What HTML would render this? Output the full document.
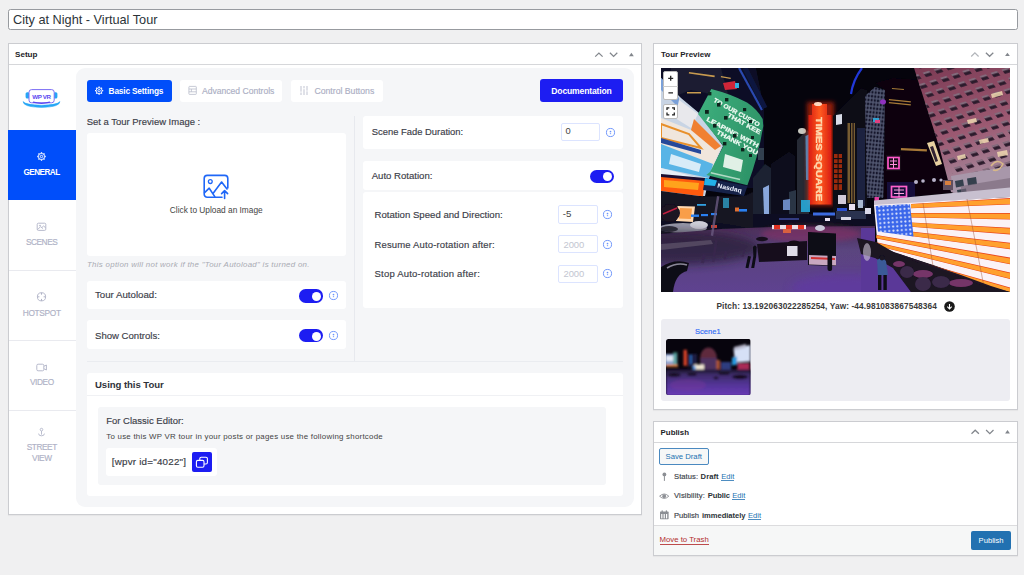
<!DOCTYPE html>
<html><head><meta charset="utf-8"><title>Edit Tour</title>
<style>
html,body{margin:0;padding:0;}
body{width:1024px;height:575px;overflow:hidden;background:#f0f0f1;font-family:"Liberation Sans",sans-serif;}
#page{position:relative;width:1024px;height:575px;overflow:hidden;background:#f0f0f1;}
.b{position:absolute;box-sizing:border-box;}
.t{position:absolute;white-space:nowrap;line-height:1;}
svg{position:absolute;overflow:visible;}
.pb{background:#fff;border:1px solid #cbccd0;box-shadow:0 1px 1px rgba(0,0,0,.04);}
.w{background:#fff;border-radius:3px;}
.tg{background:#1d1df2;border-radius:7px;}
.kn{background:#fff;border-radius:50%;}
.in{background:#fff;border:1px solid #dce4ff;border-radius:2px;}

</style></head>
<body>
<div id="page">
<div class="b " style="left:8px;top:9px;width:1010px;height:21px;background:#fff;border:1px solid #979a9f;border-radius:2.5px;"></div>
<span class="t" style="left:13.00px;top:14.33px;font-size:12.72px;color:#2c3338;">City at Night - Virtual Tour</span>
<div class="b pb" style="left:8px;top:43px;width:634px;height:472px;"></div>
<div class="b " style="left:9px;top:64px;width:632px;height:1px;background:#d6d7da;"></div>
<span class="t" style="left:15.00px;top:51.39px;font-size:8.10px;color:#1d2327;font-weight:bold;">Setup</span>
<svg style="left:0;top:0" width="1024" height="575" viewBox="0 0 1024 575" fill="none"><path d="M595.1999999999999 56.6 L598.9 53.0 L602.6 56.6" stroke="#82868c" stroke-width="1.25"/><path d="M609.9 52.800000000000004 L613.6 56.400000000000006 L617.3000000000001 52.800000000000004" stroke="#82868c" stroke-width="1.25"/><path d="M629.0 56.2 L631.4 52.800000000000004 L633.8 56.2 Z" fill="#82868c"/></svg>
<div class="b pb" style="left:653px;top:43px;width:365px;height:367px;"></div>
<div class="b " style="left:654px;top:64px;width:363px;height:1px;background:#d6d7da;"></div>
<span class="t" style="left:661.00px;top:51.01px;font-size:7.96px;color:#1d2327;font-weight:bold;">Tour Preview</span>
<svg style="left:0;top:0" width="1024" height="575" viewBox="0 0 1024 575" fill="none"><path d="M971.1999999999999 56.5 L974.9 52.9 L978.6 56.5" stroke="#b2b5ba" stroke-width="1.25"/><path d="M985.9 52.7 L989.6 56.300000000000004 L993.3000000000001 52.7" stroke="#82868c" stroke-width="1.25"/><path d="M1005.0500000000001 56.1 L1007.45 52.7 L1009.85 56.1 Z" fill="#82868c"/></svg>
<div class="b pb" style="left:653px;top:421px;width:365px;height:135px;"></div>
<div class="b " style="left:654px;top:442px;width:363px;height:1px;background:#d6d7da;"></div>
<span class="t" style="left:660.60px;top:428.59px;font-size:7.86px;color:#1d2327;font-weight:bold;">Publish</span>
<svg style="left:0;top:0" width="1024" height="575" viewBox="0 0 1024 575" fill="none"><path d="M971.5 433.79999999999995 L975.2 430.2 L978.9000000000001 433.79999999999995" stroke="#82868c" stroke-width="1.25"/><path d="M986.0999999999999 430.0 L989.8 433.59999999999997 L993.5 430.0" stroke="#82868c" stroke-width="1.25"/><path d="M1005.1 433.4 L1007.5 430.0 L1009.9 433.4 Z" fill="#82868c"/></svg>
<div class="b " style="left:8px;top:130px;width:68px;height:70px;background:#004efa;"></div>
<div class="b " style="left:9px;top:270px;width:67px;height:1px;background:#e9eaef;"></div>
<div class="b " style="left:9px;top:340px;width:67px;height:1px;background:#e9eaef;"></div>
<div class="b " style="left:9px;top:410px;width:67px;height:1px;background:#e9eaef;"></div>
<span class="t" style="left:23.50px;top:168.81px;font-size:8.20px;color:#fff;letter-spacing:-0.549px;font-weight:bold;">GENERAL</span>
<span class="t" style="left:26.00px;top:238.07px;font-size:8.30px;color:#afb2c6;letter-spacing:-0.481px;-webkit-text-stroke:0.16px #afb2c6;">SCENES</span>
<span class="t" style="left:22.75px;top:308.97px;font-size:8.30px;color:#afb2c6;letter-spacing:-0.317px;-webkit-text-stroke:0.16px #afb2c6;">HOTSPOT</span>
<span class="t" style="left:30.00px;top:378.47px;font-size:8.30px;color:#afb2c6;letter-spacing:-0.416px;-webkit-text-stroke:0.16px #afb2c6;">VIDEO</span>
<span class="t" style="left:26.75px;top:443.47px;font-size:8.30px;color:#afb2c6;letter-spacing:-0.457px;-webkit-text-stroke:0.16px #afb2c6;">STREET</span>
<span class="t" style="left:32.00px;top:454.07px;font-size:8.30px;color:#afb2c6;letter-spacing:-0.366px;-webkit-text-stroke:0.16px #afb2c6;">VIEW</span>
<svg style="left:0;top:0" width="80" height="520" viewBox="0 0 80 520" fill="none">
<!-- logo -->
<path d="M23 101.6 Q23.4 107.2 41.5 107.4 Q59.6 107.2 60 101.6 Q57 105 41.5 105.2 Q26 105 23 101.6 Z" fill="#26a6f5" stroke="#26a6f5" stroke-width="0.5"/>
<rect x="25.6" y="92.2" width="4" height="6.4" rx="1.6" fill="#26a6f5"/>
<rect x="53.4" y="92.2" width="4" height="6.4" rx="1.6" fill="#26a6f5"/>
<rect x="29" y="89.6" width="25.2" height="13.2" rx="2.6" fill="#fff" stroke="#7a6cf4" stroke-width="1"/>
<path d="M33 102.2 Q41.5 104.4 50 102.2" stroke="#5a48f0" stroke-width="1.2"/>
<!-- gear -->
<g stroke="#fff" stroke-width="0.9">
<circle cx="41.5" cy="156.5" r="3.1"/><circle cx="41.5" cy="156.5" r="1.2"/>
<g stroke-width="1.3"><path d="M41.5 152.3v1.1M41.5 159.6v1.1M37.3 156.5h1.1M44.6 156.5h1.1M38.5 153.5l.8 .8M43.7 158.7l.8 .8M38.5 159.5l.8 -.8M43.7 154.3l.8 -.8"/></g>
</g>
<!-- scenes -->
<g stroke="#afb2c6" stroke-width="0.9"><rect x="37.2" y="223.2" width="8.6" height="7.2" rx="1.2"/><path d="M37.6 229.6l3-3 2.2 2M42 227.4l1.6-1.4 2 1.8"/><circle cx="40" cy="225.6" r="0.5"/></g>
<!-- hotspot -->
<g stroke="#afb2c6" stroke-width="0.9"><circle cx="41.5" cy="296.8" r="4.1"/><path d="M41.5 292.7v2M41.5 298.9v2M37.4 296.8h2M43.6 296.8h2" stroke-width="1"/></g>
<!-- video -->
<g stroke="#afb2c6" stroke-width="0.9"><rect x="36.8" y="364.2" width="7" height="6.6" rx="1.3"/><path d="M44 366.2l2.4-1.2v5l-2.4-1.2"/></g>
<!-- street view -->
<g stroke="#afb2c6" stroke-width="0.85"><circle cx="41.5" cy="429.6" r="1.3"/><path d="M41.5 431v3.6M38.6 433.6q0 2.2 2.9 2.2t2.9-2.2"/></g>
</svg>

<span class="t" style="left:32.20px;top:93.85px;font-size:6.20px;color:#5a48f0;letter-spacing:-0.322px;font-weight:bold;">WP VR</span>
<div class="b " style="left:76px;top:68px;width:558px;height:439px;background:#f5f6f8;border-radius:9px;"></div>
<div class="b " style="left:87px;top:80px;width:85px;height:21.8px;background:#004efa;border-radius:3px;"></div>
<span class="t" style="left:108.60px;top:87.37px;font-size:8.30px;color:#fff;letter-spacing:-0.178px;font-weight:bold;">Basic Settings</span>
<div class="b w" style="left:180px;top:80px;width:102.3px;height:21.8px;"></div>
<span class="t" style="left:202.10px;top:87.16px;font-size:8.56px;color:#acafc4;-webkit-text-stroke:0.16px #acafc4;">Advanced Controls</span>
<div class="b w" style="left:291.3px;top:80px;width:91.7px;height:21.8px;"></div>
<span class="t" style="left:314.40px;top:87.03px;font-size:8.70px;color:#acafc4;-webkit-text-stroke:0.16px #acafc4;">Control Buttons</span>
<div class="b " style="left:540px;top:79.3px;width:82.6px;height:22.3px;background:#1d1df2;border-radius:3px;"></div>
<span class="t" style="left:551.25px;top:86.52px;font-size:8.60px;color:#fff;letter-spacing:-0.161px;font-weight:bold;">Documentation</span>
<span class="t" style="left:86.70px;top:117.29px;font-size:9.47px;color:#3c4049;-webkit-text-stroke:0.16px #3c4049;">Set a Tour Preview Image :</span>
<div class="b w" style="left:87px;top:133px;width:259px;height:123.3px;"></div>
<span class="t" style="left:169.80px;top:206.45px;font-size:8.32px;color:#444;">Click to Upload an Image</span>
<span class="t" style="left:87.00px;top:260.56px;font-size:7.90px;color:#a9abb3;letter-spacing:0.286px;font-style:italic;">This option will not work if the &quot;Tour Autoload&quot; is turned on.</span>
<div class="b w" style="left:87px;top:281px;width:259px;height:28px;"></div>
<span class="t" style="left:95.00px;top:290.29px;font-size:9.70px;color:#3c4049;-webkit-text-stroke:0.16px #3c4049;">Tour Autoload:</span>
<div class="b w" style="left:87px;top:320.3px;width:259px;height:29.2px;"></div>
<span class="t" style="left:95.00px;top:330.64px;font-size:9.59px;color:#3c4049;-webkit-text-stroke:0.16px #3c4049;">Show Controls:</span>
<div class="b " style="left:354px;top:116px;width:1px;height:245px;background:#e7e9ee;"></div>
<div class="b " style="left:87px;top:361px;width:536px;height:1px;background:#eaecf0;"></div>
<div class="b w" style="left:87px;top:372.5px;width:536px;height:123.1px;"></div>
<div class="b " style="left:87px;top:395px;width:536px;height:1px;background:#f0f1f4;"></div>
<span class="t" style="left:95.00px;top:379.87px;font-size:9.60px;color:#2f323a;letter-spacing:-0.062px;font-weight:bold;">Using this Tour</span>
<div class="b " style="left:98px;top:407px;width:508px;height:77.5px;background:#f5f6f8;border-radius:3px;"></div>
<span class="t" style="left:106.25px;top:416.22px;font-size:9.49px;color:#3c4049;-webkit-text-stroke:0.16px #3c4049;">For Classic Editor:</span>
<span class="t" style="left:106.25px;top:433.06px;font-size:7.90px;color:#444;letter-spacing:0.241px;">To use this WP VR tour in your posts or pages use the following shortcode</span>
<div class="b w" style="left:106px;top:447.5px;width:111px;height:28.3px;"></div>
<span class="t" style="left:111.75px;top:456.70px;font-size:9.80px;color:#3a3d46;letter-spacing:0.221px;-webkit-text-stroke:0.16px #3a3d46;">[wpvr id=&quot;4022&quot;]</span>
<div class="b " style="left:191.75px;top:451.5px;width:19.8px;height:20.2px;background:#1d1df2;border-radius:2px;"></div>
<svg style="left:191.75px;top:451.5px" width="19.8" height="20.2" viewBox="0 0 19.8 20.2" fill="none" stroke="#fff" stroke-width="1.1"><rect x="7.8" y="5.2" width="7.6" height="6.8" rx="1.4"/><rect x="4.4" y="8.4" width="7.6" height="6.8" rx="1.4" fill="#1d1df2"/></svg>
<div class="b w" style="left:363px;top:116px;width:259.5px;height:33px;"></div>
<span class="t" style="left:371.70px;top:127.44px;font-size:9.41px;color:#3c4049;-webkit-text-stroke:0.16px #3c4049;">Scene Fade Duration:</span>
<div class="b in" style="left:561.25px;top:123.4px;width:38.75px;height:17.9px;"></div>
<span class="t" style="left:565.60px;top:127.49px;font-size:9.35px;color:#444;">0</span>
<div class="b w" style="left:363px;top:161px;width:259.5px;height:29px;"></div>
<span class="t" style="left:371.70px;top:170.64px;font-size:9.59px;color:#3c4049;-webkit-text-stroke:0.16px #3c4049;">Auto Rotation:</span>
<div class="b w" style="left:363px;top:191.5px;width:259.5px;height:116.5px;"></div>
<span class="t" style="left:374.50px;top:209.66px;font-size:9.62px;color:#3c4049;-webkit-text-stroke:0.16px #3c4049;">Rotation Speed and Direction:</span>
<span class="t" style="left:374.50px;top:239.66px;font-size:9.50px;color:#3c4049;letter-spacing:0.153px;-webkit-text-stroke:0.16px #3c4049;">Resume Auto-rotation after:</span>
<span class="t" style="left:374.50px;top:269.26px;font-size:9.50px;color:#3c4049;letter-spacing:0.206px;-webkit-text-stroke:0.16px #3c4049;">Stop Auto-rotation after:</span>
<div class="b in" style="left:558px;top:205.25px;width:39.5px;height:18.3px;"></div>
<span class="t" style="left:562.75px;top:209.41px;font-size:9.67px;color:#444;">-5</span>
<div class="b in" style="left:558px;top:235px;width:39.5px;height:18.2px;"></div>
<span class="t" style="left:563.40px;top:239.71px;font-size:9.44px;color:#c3c6d1;">2000</span>
<div class="b in" style="left:558px;top:264.7px;width:39.5px;height:18.3px;"></div>
<span class="t" style="left:563.40px;top:269.31px;font-size:9.44px;color:#c3c6d1;">2000</span>
<div class="b tg" style="left:589.6px;top:169.75px;width:24.8px;height:13px;border-radius:6.5px;"></div>
<div class="b kn" style="left:603.4px;top:171.9px;width:9px;height:9px;"></div>
<div class="b tg" style="left:298.5px;top:289.4px;width:24.9px;height:13.3px;border-radius:6.65px;"></div>
<div class="b kn" style="left:312.0px;top:291.7px;width:9px;height:9px;"></div>
<div class="b tg" style="left:298.5px;top:329.4px;width:24.9px;height:13.1px;border-radius:6.55px;"></div>
<div class="b kn" style="left:312.0px;top:331.5px;width:9px;height:9px;"></div>
<svg style="left:604.75px;top:126.9px" width="11" height="11" viewBox="-5.5 -5.5 11 11"><circle r="4.05" fill="none" stroke="#6a92fa" stroke-width="0.95"/><circle cy="-1.0" r="0.85" fill="#6a92fa"/><rect x="-0.6" y="0.4" width="1.2" height="1.3" fill="#6a92fa" opacity="0.75"/></svg>
<svg style="left:601.75px;top:208.9px" width="11" height="11" viewBox="-5.5 -5.5 11 11"><circle r="4.05" fill="none" stroke="#6a92fa" stroke-width="0.95"/><circle cy="-1.0" r="0.85" fill="#6a92fa"/><rect x="-0.6" y="0.4" width="1.2" height="1.3" fill="#6a92fa" opacity="0.75"/></svg>
<svg style="left:601.75px;top:238.6px" width="11" height="11" viewBox="-5.5 -5.5 11 11"><circle r="4.05" fill="none" stroke="#6a92fa" stroke-width="0.95"/><circle cy="-1.0" r="0.85" fill="#6a92fa"/><rect x="-0.6" y="0.4" width="1.2" height="1.3" fill="#6a92fa" opacity="0.75"/></svg>
<svg style="left:601.75px;top:268.3px" width="11" height="11" viewBox="-5.5 -5.5 11 11"><circle r="4.05" fill="none" stroke="#6a92fa" stroke-width="0.95"/><circle cy="-1.0" r="0.85" fill="#6a92fa"/><rect x="-0.6" y="0.4" width="1.2" height="1.3" fill="#6a92fa" opacity="0.75"/></svg>
<svg style="left:327.6px;top:289.75px" width="11" height="11" viewBox="-5.5 -5.5 11 11"><circle r="4.05" fill="none" stroke="#6a92fa" stroke-width="0.95"/><circle cy="-1.0" r="0.85" fill="#6a92fa"/><rect x="-0.6" y="0.4" width="1.2" height="1.3" fill="#6a92fa" opacity="0.75"/></svg>
<svg style="left:327.6px;top:329.6px" width="11" height="11" viewBox="-5.5 -5.5 11 11"><circle r="4.05" fill="none" stroke="#6a92fa" stroke-width="0.95"/><circle cy="-1.0" r="0.85" fill="#6a92fa"/><rect x="-0.6" y="0.4" width="1.2" height="1.3" fill="#6a92fa" opacity="0.75"/></svg>
<svg style="left:0;top:0" width="640" height="520" viewBox="0 0 640 520" fill="none">
<!-- basic gear -->
<g stroke="#fff" stroke-width="0.9"><circle cx="99.1" cy="90.7" r="3"/><circle cx="99.1" cy="90.7" r="1.2"/><g stroke-width="1.3"><path d="M99.1 86.6v1.1M99.1 93.7v1.1M95 90.7h1.1M102.1 90.7h1.1M96.2 87.8l.8 .8M101.2 92.8l.8 .8M96.2 93.6l.8 -.8M101.2 88.6l.8 -.8"/></g></g>
<!-- advanced icon -->
<g stroke="#b9bccc" stroke-width="0.8"><rect x="188.9" y="86.4" width="7.4" height="8" rx="0.6"/><path d="M188.9 89h7.4M188.9 91.8h7.4M191.4 89v2.8"/></g>
<!-- control icon -->
<g stroke="#b9bccc" stroke-width="0.9"><path d="M301 86v9M304 86v9M307 86v9"/></g>
<g stroke="#f5f6f8" stroke-width="1.2"><path d="M300 92.2h2M303 88.6h2M306 91h2"/></g>
<!-- upload icon -->
<g stroke="#1f67f7" stroke-width="1.6" stroke-linecap="round" stroke-linejoin="round">
<path d="M222 197.2H207.2a3 3 0 0 1 -3 -3V178.4a3 3 0 0 1 3 -3h17.6a3 3 0 0 1 3 3V188"/>
<circle cx="210.3" cy="181.6" r="1.9" stroke-width="1.3"/>
<path d="M204.6 192.6l4.6 -4.4 5.6 8.4M213 193.4l8.6 -11.4 5.4 7"/>
<path d="M224.6 198.4v-7.6M221.6 193.6l3 -3 3 3"/>
</g>
</svg>

<svg style="left:661px;top:68px;overflow:hidden" width="349" height="224" viewBox="0 0 349 224">
<defs>
<filter id="bl" x="-5%" y="-5%" width="110%" height="110%"><feGaussianBlur stdDeviation="0.65"/></filter>
<filter id="bl2" x="-20%" y="-20%" width="140%" height="140%"><feGaussianBlur stdDeviation="2.2"/></filter>
<filter id="bl4" x="-30%" y="-30%" width="160%" height="160%"><feGaussianBlur stdDeviation="5"/></filter>
<linearGradient id="gnd" x1="0" y1="0" x2="0" y2="1"><stop offset="0" stop-color="#4c2c56"/><stop offset="0.35" stop-color="#5a447e"/><stop offset="1" stop-color="#5e4290"/></linearGradient>
<linearGradient id="gndL" x1="0" y1="0" x2="1" y2="0"><stop offset="0" stop-color="#1c1828" stop-opacity="0.95"/><stop offset="0.55" stop-color="#2a2238" stop-opacity="0.55"/><stop offset="1" stop-color="#2a2238" stop-opacity="0"/></linearGradient>
<linearGradient id="pinkb" x1="0" y1="0" x2="0.25" y2="1"><stop offset="0" stop-color="#7c3a54"/><stop offset="0.6" stop-color="#9c5a72"/><stop offset="1" stop-color="#a68a9e"/></linearGradient>
<linearGradient id="grn" x1="0" y1="0" x2="1" y2="0.4"><stop offset="0" stop-color="#3eb07e"/><stop offset="1" stop-color="#2e9468"/></linearGradient>
<linearGradient id="ts" x1="0" y1="0" x2="1" y2="0"><stop offset="0" stop-color="#d81c10"/><stop offset="0.5" stop-color="#ff5a20"/><stop offset="1" stop-color="#d81c10"/></linearGradient>
<pattern id="win" width="11.5" height="10" patternUnits="userSpaceOnUse" patternTransform="rotate(-17) skewX(20)"><rect x="1" y="1" width="6.6" height="5.2" fill="#2c1a2c"/><rect x="1" y="1" width="6.6" height="2" fill="#d0b0c0" opacity="0.55"/></pattern>
<pattern id="lat" width="3.2" height="4" patternUnits="userSpaceOnUse" patternTransform="rotate(6)"><rect width="3.2" height="4" fill="#8088a8"/><rect x="0.6" y="0.7" width="2.1" height="2.6" fill="#1a1c34"/></pattern>
<pattern id="dots" width="4.2" height="4.2" patternUnits="userSpaceOnUse" patternTransform="rotate(-4)"><circle cx="2.1" cy="2.1" r="1" fill="#fff"/></pattern>
</defs>
<rect width="349" height="224" fill="#05040c"/>
<g filter="url(#bl)">
<polygon points="0,0 95,0 103,40 103,120 0,120" fill="#0b0f26"/>
<polygon points="10,0 60,0 68,30 30,22 10,30" fill="#1a1c30"/>
<g fill="#c89a50"><rect x="28" y="4" width="26" height="1.6" transform="rotate(8 28 4)"/><rect x="26" y="24" width="14" height="1.5"/><rect x="60" y="8" width="10" height="1.3" transform="rotate(10 60 8)"/></g>
<path d="M78 0 L101 42" stroke="#2a48b0" stroke-width="2.2" fill="none"/>
<path d="M84 0 L104 40" stroke="#0e1640" stroke-width="5" fill="none"/>
<polygon points="62,15 74,13 76,21 64,22" fill="#d02838"/><rect x="74" y="15" width="4" height="5" fill="#30b0e0"/>
<polygon points="0,10 20,30 38,45 62,78 49,106 44,128 0,128" fill="#c8d4e4"/>
<polygon points="0,10 18,30 18,40 0,22" fill="#7aa0d8"/>
<polygon points="18,32 37,46 30,60 14,50" fill="#e8e8ec"/>
<polygon points="0,50 30,62 60,80 52,98 0,78" fill="#f0e6dc"/>
<polygon points="33,51 60,78 54,82 30,62" fill="#f08030"/>
<polygon points="0,56 28,66 40,80 0,70" fill="none" stroke="#e8902c" stroke-width="2"/>
<polygon points="0,76 52,96 48,110 0,100" fill="#58b4e6"/>
<polygon points="10,86 40,96 38,104 8,96" fill="#d8ecf8"/>
<polygon points="0,100 46,112 44,118 0,108" fill="#e8eef6"/>
<polygon points="0,70 40,82 40,86 0,75" fill="#284a9a"/>
<path d="M50.3 21 Q70 26 86 34.5 Q96 41 101.7 51 L102.3 58 Q97 90 86.4 117.2 L45.3 107 L49 104 L62.4 78 L37 46 Z" fill="url(#grn)"/>
<g font-family="Liberation Sans, sans-serif" font-weight="bold" font-size="6.2" fill="#eefaf2" stroke="#eefaf2" stroke-width="0.25"><text transform="translate(52,33.5) rotate(29)" textLength="52" lengthAdjust="spacingAndGlyphs">TO OUR CUSTO</text><text transform="translate(66,48.5) rotate(29)" textLength="37" lengthAdjust="spacingAndGlyphs">THAT KEE</text><text transform="translate(45,52.5) rotate(28)" textLength="58" lengthAdjust="spacingAndGlyphs">LEAPING WITH</text><text transform="translate(55,65.5) rotate(28)" textLength="46" lengthAdjust="spacingAndGlyphs">THANK YOU</text></g>
<g fill="#10241c"><rect x="47" y="24" width="3.4" height="3.4"/><rect x="56" y="35" width="3.6" height="3.6"/><rect x="64" y="30" width="3.4" height="3.4"/><rect x="44" y="42" width="3.8" height="3.8"/><rect x="63" y="48" width="3.6" height="3.6"/><rect x="82" y="40" width="3.2" height="3.2"/><rect x="52" y="56" width="3.6" height="3.6"/><rect x="72" y="66" width="3.6" height="3.6"/><rect x="88" y="52" width="3" height="3"/><rect x="62" y="74" width="3.4" height="3.4"/><rect x="80" y="80" width="3.4" height="3.4"/><rect x="90" y="68" width="3" height="3"/><rect x="88" y="86" width="3" height="3"/></g>
<g fill="#e0f0e6"><polygon points="64,86 82,92 80,104 62,99"/></g>
<rect x="50" y="104" width="30" height="1.6" transform="rotate(13 50 104)" fill="#d0e8da" opacity="0.8"/>
<polygon points="0,108 44,112 42,128.5 0,123" fill="#ff5a10"/>
<polygon points="3,112 38,115 37,122 3,119" fill="#ffb020" opacity="0.85"/>
<polygon points="0,106 44,110 44,113 0,109" fill="#1a1030"/>
<polygon points="44,110 86.5,118 83,128 42,122" fill="#14204a"/>
<polygon points="44,110 56,112.5 54,118 43,117" fill="#20b0e8"/>
<text transform="translate(56,119.6) rotate(12)" font-family="Liberation Sans, sans-serif" font-weight="bold" font-size="6.4" textLength="25" lengthAdjust="spacingAndGlyphs" fill="#f0f4ff">Nasdaq</text>
<polygon points="92,110 104,96 110,100 110,146 92,146" fill="#1a2230"/>
<polygon points="102,120 108,117 108,146 103,146" fill="#8aa8dc"/>
<rect x="97" y="80" width="6" height="12" fill="#304050" />
<polygon points="0,123 42,128.5 83,128 92,124 92,160 0,166" fill="#121222"/>
<polygon points="16.5,138 34,138.5 32,154 15,153" fill="#ffd8b0"/><polygon points="19,140 31,140.5 30,151 18,150.5" fill="#f89030" opacity="0.8"/>
<ellipse cx="9" cy="145" rx="10" ry="9" fill="#1a1220"/><path d="M2 146 L16 140" stroke="#c02040" stroke-width="1.6"/>
<g fill="#2a80f0"><rect x="30" y="146.5" width="8" height="2.4"/><rect x="40" y="146" width="7" height="2.2"/><rect x="50" y="145" width="6" height="2.2"/><rect x="78" y="141" width="8" height="2.6"/><rect x="36" y="136" width="9" height="1.8" fill="#30a0e0"/></g>
<rect x="74" y="139.5" width="4" height="4" fill="#e07030"/>
<polygon points="62,130 68,130 68,140 62,140" fill="#30a0c8" opacity="0.8"/>
<ellipse cx="22" cy="160" rx="24" ry="5" fill="#9a9aaa"/><ellipse cx="38" cy="157" rx="9" ry="4" fill="#d0d0da"/><ellipse cx="8" cy="161" rx="9" ry="3" fill="#30303c"/>
<rect x="50" y="157" width="6" height="3" fill="#d04030"/>
<polygon points="110,96 128,84 134,88 134,150 110,150" fill="#0c0e1c"/>
<polygon points="136,72 146,62 148,64 148,150 136,150" fill="#262a34"/>
<ellipse cx="141" cy="63" rx="4" ry="3" fill="#c8c8c0"/>
<polygon points="144.5,68 149,66 149,112 145,112" fill="#2a9ae0"/>
<polygon points="128,124 135,122 135,146 128,146" fill="#2a3444"/>
<polygon points="122,132 129,131 129,142 122,142" fill="#6a88c0"/>
<rect x="146" y="34" width="27" height="104" fill="#ff3010" opacity="0.55" filter="url(#bl2)"/>
<polygon points="151,36 166,36 166,47 170.5,47 170.5,136.5 147.5,136.5 147.5,47 151,47" fill="url(#ts)"/>
<ellipse cx="157" cy="36" rx="4" ry="2" fill="#ffd8c0"/>
<text transform="translate(155.2,49) rotate(90)" font-family="Liberation Sans, sans-serif" font-weight="bold" font-size="9.6" textLength="84" lengthAdjust="spacingAndGlyphs" fill="#ffd2a0" stroke="#ffe8c8" stroke-width="0.3">TIMES SQUARE</text>
<polygon points="172,48 200,20 206,22 206,150 172,150" fill="#0a0812"/>
<polygon points="175,47 181,46 181,56 175,57" fill="#d8dce8"/>
<rect x="173" y="86" width="8" height="36" fill="#9a2a10"/><g fill="#0a0812"><rect x="173" y="90" width="8" height="1.2"/><rect x="173" y="95" width="8" height="1.2"/><rect x="173" y="100" width="8" height="1.2"/><rect x="173" y="105" width="8" height="1.2"/><rect x="173" y="110" width="8" height="1.2"/><rect x="173" y="115" width="8" height="1.2"/><rect x="176.6" y="86" width="1" height="36"/></g>
<rect x="186.5" y="55" width="7.5" height="80" fill="#8a6a38" opacity="0.85"/><g fill="#0a0812"><rect x="189" y="55" width="1" height="80"/><rect x="191.6" y="55" width="1" height="80"/></g>
<rect x="196" y="60" width="8" height="78" fill="#1c2440"/>
<path d="M190 26 Q192 12 201 0" stroke="#2038d8" stroke-width="2.2" fill="none"/>
<polygon points="204,28 214,19 224,22 226,130 206,130" fill="url(#lat)"/>
<polygon points="204,28 214,19 224,22 226,130 206,130" fill="#0a0818" opacity="0.35"/>
<polygon points="214,15 232,10 262,12 290,124 300,128 300,150 222,150 224,22" fill="#09060f"/>
<g fill="#a87838"><rect x="228" y="31" width="22" height="1.2" transform="rotate(6 228 31)"/><rect x="228" y="34" width="22" height="1.2" transform="rotate(6 228 34)"/><rect x="240" y="80" width="26" height="2.2" transform="rotate(3 240 80)"/><rect x="231" y="20" width="12" height="1" transform="rotate(5 231 20)"/></g>
<ellipse cx="222" cy="34" rx="3" ry="2.4" fill="#9030c0"/>
<rect x="212" y="50" width="6" height="4" fill="#30a0d0"/><rect x="214" y="52" width="5" height="3" fill="#e04080"/>
<rect x="225" y="87" width="15" height="16" fill="#120818"/><rect x="227" y="89.5" width="11" height="11" fill="none" stroke="#ff58c8" stroke-width="1.7"/><path d="M229 93h7M229 96.5h7M232.5 90v10" stroke="#ff90dc" stroke-width="1"/>
<rect x="226" y="114" width="28" height="22" fill="#14103a"/><rect x="230.5" y="118.5" width="15" height="10.5" fill="none" stroke="#ff60cc" stroke-width="1.7"/><path d="M233 122h10M233 125.5h10M238 119v10" stroke="#ffa0e0" stroke-width="1"/>
<rect x="213.5" y="129" width="4.5" height="5" fill="#e040a0"/>
<polygon points="266,75 273,73 281,96 275,98" fill="#e8d0a0"/><polygon points="269,79 272,78 277,93 274.5,94" fill="#302030"/>
<polygon points="253,0 349,0 349,126 300,128 290,124 278,78" fill="url(#pinkb)"/>
<polygon points="253,0 349,0 349,100 293,108 278,78" fill="url(#win)"/>
<g fill="#f0d8b0" opacity="0.85"><polygon points="330,26 341,23 342,27 331,30"/><polygon points="306,52 315,50 316,54 307,56"/><polygon points="318,72 327,70 328,74 319,76"/><polygon points="336,84 346,82 347,87 337,89"/><polygon points="296,88 304,86 305,90 297,92"/></g>
<polygon points="290,108 349,98 349,126 300,128 292,124" fill="#a897aa"/>
<g fill="#34404e"><polygon points="294,113 302,111.5 303,118 295,119.5"/><polygon points="306,110.5 315,109 316,116 307,117.5"/><polygon points="296,122 305,120.5 306,126 297,127"/></g>
<path d="M330 98 q6 -8 12 -2 q-4 8 -10 6" stroke="#d8b888" stroke-width="1.6" fill="none"/>
<polygon points="300,118 349,110 349,128 300,130" fill="#786878" opacity="0.6"/>
<g fill="#b8b0c8"><circle cx="255" cy="114" r="2"/><circle cx="262" cy="113" r="1.8"/><circle cx="273" cy="112" r="2"/><circle cx="280" cy="112" r="1.6"/></g>
<rect x="282" y="112" width="10" height="10" fill="#605060"/><rect x="284" y="113" width="6" height="4" fill="#d88040"/>
<polygon points="92,146 214,146 214,160 92,162" fill="#101020"/>
<g fill="#3a6ae0"><rect x="152" y="144.5" width="22" height="3"/><rect x="140" y="132" width="9" height="12" fill="#28a8d8" opacity="0.9"/><rect x="176" y="140" width="10" height="4" fill="#2a50d0"/><rect x="196" y="146" width="8" height="3" fill="#4050c0"/><rect x="118" y="150" width="20" height="2" fill="#303a80"/></g>
<g fill="#e8e0f0"><rect x="177" y="127" width="8" height="9" opacity="0.9"/><rect x="188" y="136" width="6" height="6"/><rect x="164" y="150" width="5" height="3"/><rect x="197" y="132" width="5" height="8" fill="#a8b8d0"/></g>
<rect x="175" y="143" width="30" height="8" fill="#2a3050"/>
<g fill="#d8d8e8"><rect x="204" y="140" width="6" height="6"/><rect x="180" y="149" width="10" height="3"/></g>
<polygon points="0,166 60,161 112,159 214,158 214,224 0,224" fill="url(#gnd)"/>
<ellipse cx="10" cy="180" rx="90" ry="17" fill="#1c1828" opacity="0.62" filter="url(#bl4)"/>
<ellipse cx="150" cy="166" rx="50" ry="8" fill="#8a3068" opacity="0.55" filter="url(#bl2)"/>
<ellipse cx="185" cy="220" rx="55" ry="14" fill="#6030b0" opacity="0.45" filter="url(#bl4)"/>
<polygon points="0,176 50,172 52,176 0,182" fill="#5a5068" opacity="0.8"/>
<rect x="111" y="157" width="34" height="4.2" fill="#e8e0e8"/><g fill="#e03020"><rect x="113" y="157" width="6" height="4.2"/><rect x="125" y="157" width="6" height="4.2"/><rect x="137" y="157" width="6" height="4.2"/></g>
<rect x="122" y="161" width="8" height="4" fill="#d86040"/>
<ellipse cx="159" cy="160" rx="5" ry="3" fill="#c8c8d8"/>
<polygon points="147,164 175,165.5 175,198 147,197" fill="#0b0b12"/>
<polygon points="148,187 175,188 175,197.5 148,196.5" fill="#c8a8c0"/><polygon points="150,189 174,190 174,192 150,191" fill="#d03030"/>
<rect x="166.5" y="181" width="4.6" height="22" rx="2" fill="#0c0a14"/>
<polygon points="96,176 146,173 146,192 98,194" fill="#17101e"/>
<rect x="126" y="178" width="10.5" height="10" fill="#e0dce8"/>
<ellipse cx="101" cy="171" rx="6" ry="2.2" fill="#14101c"/><ellipse cx="133" cy="175" rx="6" ry="2.4" fill="#120e18"/>
<path d="M92 179 q2 -3 3.6 0 l-0.4 9 l-2 12 l-2.4 0 l-0.6 0 l2.2 -12 z" fill="#0c0a14"/><rect x="87" y="188" width="3" height="12" transform="rotate(12 87 188)" fill="#0c0a14"/>
<g fill="#3a2850" opacity="0.8"><rect x="42" y="186" width="3" height="9" transform="rotate(14 42 186)"/><rect x="64" y="183" width="2.6" height="8" transform="rotate(14 64 183)"/><rect x="82" y="182" width="2.4" height="7" transform="rotate(14 82 182)"/><rect x="54" y="172" width="2.6" height="22" transform="rotate(8 54 172)" opacity="0.7"/></g>
<rect x="56" y="128" width="2.4" height="40" transform="rotate(9 56 128)" fill="#6a5a80" opacity="0.8"/>
<path d="M0 199 Q14 190 28 195 L26 203 Q14 206 12 224 L0 224 Z" fill="#110d18"/><path d="M6 200 Q16 194 26 197" stroke="#8a8898" stroke-width="1.6" fill="none"/>
<polygon points="213,132.5 349,119.5 349,129 213,138" fill="#c8c0d0"/>
<polygon points="213,137 349,129 349,224 334,218 301,207 272,197 238,186 217,182" fill="#fbf2f6"/>
<polygon points="250,135.9 349.0,130.0 349.0,136.6 250,140.2" fill="#e8401c"/>
<polygon points="250,136.2 349.0,130.8 349.0,136.0 250,139.9" fill="#ffa02e"/>
<polygon points="250,145.1 349.0,144.9 349.0,151.5 250,149.4" fill="#e8401c"/>
<polygon points="250,145.5 349.0,145.7 349.0,150.9 250,149.2" fill="#ffa02e"/>
<polygon points="250,154.4 349.0,159.8 349.0,166.4 250,158.7" fill="#e8401c"/>
<polygon points="250,154.7 349.0,160.6 349.0,165.8 250,158.4" fill="#ffa02e"/>
<polygon points="250,163.6 349.0,174.7 349.0,181.3 250,168.0" fill="#e8401c"/>
<polygon points="250,164.0 349.0,175.5 349.0,180.8 250,167.7" fill="#ffa02e"/>
<polygon points="215.5,167.1 349.0,189.6 349.0,196.2 215.5,170.4" fill="#e8401c"/>
<polygon points="215.5,167.4 349.0,190.4 349.0,195.7 215.5,170.1" fill="#ffa02e"/>
<polygon points="215.5,174.3 349.0,204.5 349.0,211.1 215.5,177.7" fill="#e8401c"/>
<polygon points="215.5,174.7 349.0,205.3 349.0,210.5 215.5,177.4" fill="#ffa02e"/>
<polygon points="215.5,181.6 349.0,219.4 349.0,226.1 215.5,185.0" fill="#e8401c"/>
<polygon points="215.5,182.0 349.0,220.2 349.0,225.5 215.5,184.7" fill="#ffa02e"/>
<polygon points="214.5,138.0 249,135.9 252.5,168.6 217,163.6" fill="#3a66ea"/>
<polygon points="214.5,138.0 249,135.9 252.5,168.6 217,163.6" fill="url(#dots)" opacity="0.85"/>
<path d="M262 135 L272 198 M306 131 L324 224" stroke="#a05030" stroke-width="0.8" opacity="0.55" fill="none"/>
<polygon points="214,176 217,179 239,186 272,197.5 300,207 330,218 349,224 214,224" fill="#221628"/>
<polygon points="200,160 214,160 214,178 232,190 250,224 200,224" fill="#5a3898"/>
<polygon points="196,170 215,174 236,186 262,196 292,206 318,216 349,224 250,224 232,200 214,190 200,186" fill="#1a1222"/>
<g fill="#c050a0" opacity="0.55"><ellipse cx="262" cy="206" rx="10" ry="4"/><ellipse cx="300" cy="215" rx="12" ry="4"/><ellipse cx="238" cy="196" rx="6" ry="3"/></g>
<g fill="#3a2a48"><ellipse cx="246" cy="204" rx="7" ry="6"/><ellipse cx="280" cy="214" rx="9" ry="6"/><ellipse cx="262" cy="216" rx="8" ry="7"/></g>
<ellipse cx="206" cy="184" rx="4" ry="9" fill="#d0c8d8" opacity="0.6"/>
<path d="M216 192 q5 -4 9 1 l2 14 l-10 1 z" fill="#3a5a98"/><rect x="217" y="207" width="3.4" height="15" fill="#0c0a14"/><rect x="222.4" y="207" width="3.4" height="15" fill="#0c0a14"/><circle cx="221" cy="190" r="2.4" fill="#1a1420"/>
</g>
</svg>
<div class="b " style="left:663px;top:71px;width:15.3px;height:29.3px;background:#fff;border-radius:2px;border:0.5px solid #bbb;"></div>
<div class="b " style="left:663px;top:85.5px;width:15.3px;height:0.6px;background:#ccc;"></div>
<svg style="left:663px;top:71px" width="15.3" height="29.3" viewBox="0 0 15.3 29.3" stroke="#222" stroke-width="1.3"><path d="M5.2 7.3h5M7.7 4.8v5M5.4 21.8h4.6"/></svg>
<div class="b " style="left:663px;top:104px;width:15.3px;height:14.5px;background:#fff;border-radius:2px;border:0.5px solid #bbb;"></div>
<svg style="left:663px;top:104px" width="15.3" height="14.5" viewBox="0 0 15.3 14.5" stroke="#222" stroke-width="1.3" fill="none"><path d="M4 6V3.8h2.3M9 3.8h2.3V6M11.3 8.6v2.2H9M6.3 10.8H4V8.6"/></svg>
<span class="t" style="left:716.40px;top:301.97px;font-size:8.30px;color:#3a3a3a;letter-spacing:0.104px;font-weight:bold;">Pitch: 13.192063022285254, Yaw: -44.981083867548364</span>
<svg style="left:943.5px;top:300.5px" width="11" height="11" viewBox="-5.5 -5.5 11 11"><circle r="5.3" fill="#1a1a1a"/><path d="M0 -2.6V2.2M-2.2 0.2L0 2.5L2.2 0.2" stroke="#fff" stroke-width="1.1" fill="none"/></svg>
<div class="b " style="left:661px;top:319px;width:349px;height:82px;background:#ededf2;border-radius:3px;"></div>
<span class="t" style="left:695.00px;top:327.86px;font-size:7.55px;color:#2f6bf6;-webkit-text-stroke:0.16px #2f6bf6;">Scene1</span>
<svg style="left:666.3px;top:338.5px;overflow:hidden;border-radius:2.5px" width="84.4" height="56.3" viewBox="0 0 84.4 56.3">
<defs><filter id="tb" x="-10%" y="-10%" width="120%" height="120%"><feGaussianBlur stdDeviation="0.9"/></filter>
<linearGradient id="tg1" x1="0" y1="0" x2="0" y2="1"><stop offset="0" stop-color="#3a2a62"/><stop offset="0.5" stop-color="#533496"/><stop offset="1" stop-color="#6a3cb8"/></linearGradient></defs>
<rect width="84.4" height="56.3" fill="#07040d"/>
<g filter="url(#tb)">
<ellipse cx="42.5" cy="20" rx="8.6" ry="11.5" fill="#5e2a3e"/>
<rect x="34.5" y="19" width="16.5" height="13" fill="#4e3060"/>
<rect x="-1" y="15" width="12" height="12" fill="#8ea6d4"/>
<rect x="0" y="17" width="8" height="5" fill="#e4e9f6"/>
<rect x="7" y="13" width="4.4" height="14" fill="#4aa090" opacity="0.7"/>
<rect x="0" y="25.5" width="12" height="2.4" fill="#d87838"/>
<rect x="17.6" y="10.8" width="3.2" height="16" fill="#e4462a"/>
<rect x="22" y="15" width="9" height="13" fill="#1c1c42"/>
<rect x="24" y="16" width="1.6" height="9" fill="#2c6cc0"/>
<rect x="28" y="25.5" width="10" height="8" fill="#efe6d2"/>
<rect x="26.6" y="27" width="3" height="5.6" fill="#5a9ae4"/>
<rect x="50.5" y="21" width="3.6" height="9" fill="#d86a3c" opacity="0.75"/>
<rect x="55" y="23" width="10" height="9" fill="#2e3c80"/>
<polygon points="67.5,9.5 84.4,6 84.4,22.5 69,23.5" fill="#d6e0f6"/>
<polygon points="66,18.5 71,17.5 71,25.5 66,26.5" fill="#2c9ade"/>
<polygon points="68,8 80,5 80,8.4 68,11.4" fill="#b8b8cc"/>
<rect x="71.5" y="24" width="12" height="8.6" fill="#a82a56"/>
<rect x="0" y="30.5" width="84.4" height="5" fill="#251c40"/>
<rect x="0" y="34" width="84.4" height="23" fill="url(#tg1)"/>
<g fill="#15101e"><ellipse cx="8" cy="36" rx="7" ry="1.8"/><ellipse cx="74" cy="38" rx="8" ry="2.2"/><ellipse cx="50" cy="39" rx="2.6" ry="1.2"/><ellipse cx="26" cy="35.5" rx="5" ry="1.3"/><ellipse cx="58" cy="34.5" rx="6" ry="1.3"/></g>
<ellipse cx="22" cy="46" rx="18" ry="6" fill="#7a3a9a" opacity="0.4"/>
</g>
</svg>

<div class="b " style="left:659px;top:448px;width:50px;height:16.9px;background:#f6f7f7;border:1px solid #4a89c0;border-radius:2px;"></div>
<span class="t" style="left:665.60px;top:453.48px;font-size:7.70px;color:#2271b1;">Save Draft</span>
<svg style="left:650px;top:440px" width="40" height="90" viewBox="650 440 40 90" fill="none">
<g fill="#8c8f94"><circle cx="664.4" cy="474.4" r="1.9"/><rect x="663.9" y="475.5" width="1" height="5.4"/></g>
<g stroke="#8c8f94" stroke-width="0.9"><path d="M659.6 496.2q4.6 -4.4 9.2 0q-4.6 4.4 -9.2 0z"/><circle cx="664.2" cy="496.2" r="1.5" fill="#8c8f94"/></g>
<g fill="#8c8f94"><rect x="660" y="511.6" width="8.6" height="7.6" rx="0.6"/><rect x="661.6" y="510.4" width="1.2" height="2"/><rect x="665.8" y="510.4" width="1.2" height="2"/></g>
<g fill="#fff"><rect x="661.2" y="514" width="1.2" height="4.4"/><rect x="663.6" y="514" width="1.2" height="4.4"/><rect x="666" y="514" width="1.2" height="4.4"/></g>
</svg>

<span class="t" style="left:674.00px;top:472.87px;font-size:7.60px;color:#3c434a;letter-spacing:0.063px;-webkit-text-stroke:0.16px #3c434a;">Status:</span>
<span class="t" style="left:700.60px;top:472.87px;font-size:7.60px;color:#2c3338;letter-spacing:0.083px;font-weight:bold;">Draft</span>
<span class="t" style="left:721.25px;top:472.87px;font-size:7.60px;color:#2271b1;letter-spacing:0.013px;">Edit</span>
<div class="b " style="left:721.25px;top:479.8px;width:13.149999999999977px;height:0.8px;background:#2271b1;opacity:.8;"></div>
<span class="t" style="left:674.00px;top:491.87px;font-size:7.60px;color:#3c434a;letter-spacing:0.143px;-webkit-text-stroke:0.16px #3c434a;">Visibility:</span>
<span class="t" style="left:707.75px;top:491.87px;font-size:7.60px;color:#2c3338;letter-spacing:-0.092px;font-weight:bold;">Public</span>
<span class="t" style="left:732.25px;top:491.87px;font-size:7.60px;color:#2271b1;letter-spacing:-0.024px;">Edit</span>
<div class="b " style="left:732.25px;top:498.8px;width:13.0px;height:0.8px;background:#2271b1;opacity:.8;"></div>
<span class="t" style="left:674.00px;top:511.57px;font-size:7.60px;color:#3c434a;letter-spacing:0.010px;-webkit-text-stroke:0.16px #3c434a;">Publish</span>
<span class="t" style="left:701.90px;top:511.57px;font-size:7.60px;color:#2c3338;letter-spacing:-0.021px;font-weight:bold;">immediately</span>
<span class="t" style="left:748.00px;top:511.57px;font-size:7.60px;color:#2271b1;letter-spacing:0.038px;">Edit</span>
<div class="b " style="left:748px;top:518.5px;width:13.25px;height:0.8px;background:#2271b1;opacity:.8;"></div>
<div class="b " style="left:654px;top:525.4px;width:363px;height:29.6px;background:#f6f7f7;border-top:1px solid #dcdcde;"></div>
<span class="t" style="left:659.50px;top:536.42px;font-size:7.77px;color:#b32d2e;">Move to Trash</span>
<div class="b " style="left:659.5px;top:543.6px;width:49.25px;height:0.8px;background:#b32d2e;opacity:.85;"></div>
<div class="b " style="left:971px;top:531.3px;width:40px;height:18.3px;background:#2271b1;border-radius:2px;"></div>
<span class="t" style="left:978.60px;top:537.45px;font-size:7.62px;color:#fff;">Publish</span>
</div>
</body></html>
